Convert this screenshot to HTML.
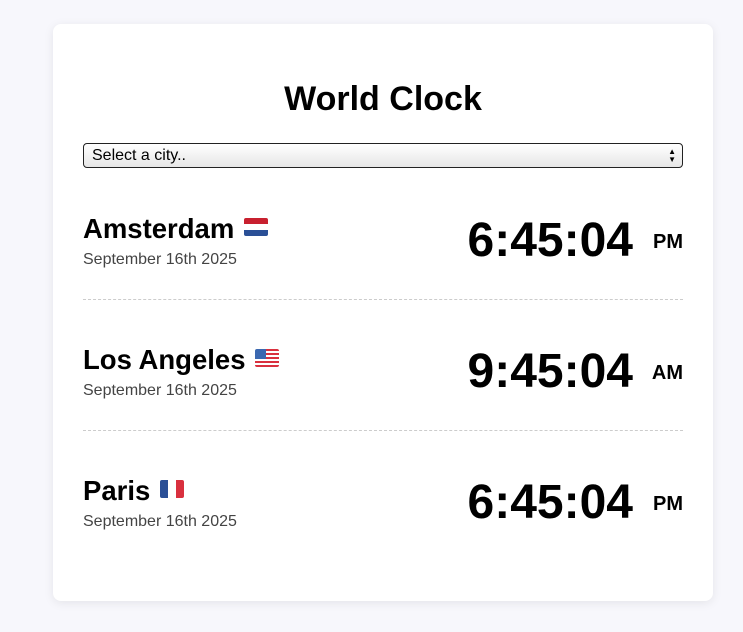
<!DOCTYPE html>
<html><head><meta charset="utf-8"><style>
*{margin:0;padding:0;box-sizing:border-box}
body{width:743px;height:632px;background:#f7f7fc;font-family:"Liberation Sans",Arial,sans-serif;position:relative;overflow:hidden}
.card{position:absolute;left:53px;top:24px;width:660px;height:577px;background:#fff;border-radius:8px;box-shadow:0 2px 10px rgba(0,0,0,.08)}
h1{position:absolute;left:0;right:0;top:56px;text-align:center;font-size:34px;font-weight:bold;color:#000}
.sel{position:absolute;left:30px;top:119px;width:600px;height:25px;border:1px solid #222;border-radius:4px;background:linear-gradient(#fff,#e6e6e6);font-size:16px;padding:2px 8px;line-height:19px}
.arr{position:absolute;right:6px;top:4px;font-size:8px;line-height:8px}
.row{position:absolute;left:30px;width:600px;height:131px}
.sep{position:absolute;left:30px;width:600px;border-top:1px dashed #ccc}
.name{position:absolute;left:0;top:0;font-size:27.5px;font-weight:bold;color:#000;white-space:nowrap}
.date{position:absolute;left:0;top:38px;font-size:16px;color:#444}
.time{position:absolute;right:50px;top:0px;font-size:48px;font-weight:bold;color:#000}
.ap{position:absolute;right:0;top:18px;font-size:20px;font-weight:bold}
.flag{display:inline-block;width:24px;height:18px;vertical-align:2px;margin-left:2px;border-radius:2px;overflow:hidden}
</style></head><body>
<div class="card">
<h1>World Clock</h1>
<div class="sel">Select a city..<span class="arr">▲<br>▼</span></div>
<div class="row" style="top:189px"><div class="name">Amsterdam <span class="flag" style="background:linear-gradient(#c8202f 33%,#fff 33%,#fff 66%,#2a4f96 66%)"></span></div><div class="date">September 16th 2025</div><div class="time">6:45:04</div><div class="ap">PM</div></div>
<div class="sep" style="top:275px"></div>
<div class="row" style="top:320px"><div class="name">Los Angeles <span class="flag" style="background:linear-gradient(#3b68b0,#3b68b0) 0 0/11px 10px no-repeat,repeating-linear-gradient(#d9303e 0 2px,#fff 2px 4px)"></span></div><div class="date">September 16th 2025</div><div class="time">9:45:04</div><div class="ap">AM</div></div>
<div class="sep" style="top:406px"></div>
<div class="row" style="top:451px"><div class="name">Paris <span class="flag" style="background:linear-gradient(90deg,#2a4f96 33%,#fff 33%,#fff 66%,#d9303e 66%)"></span></div><div class="date">September 16th 2025</div><div class="time">6:45:04</div><div class="ap">PM</div></div>
</div>
</body></html>
